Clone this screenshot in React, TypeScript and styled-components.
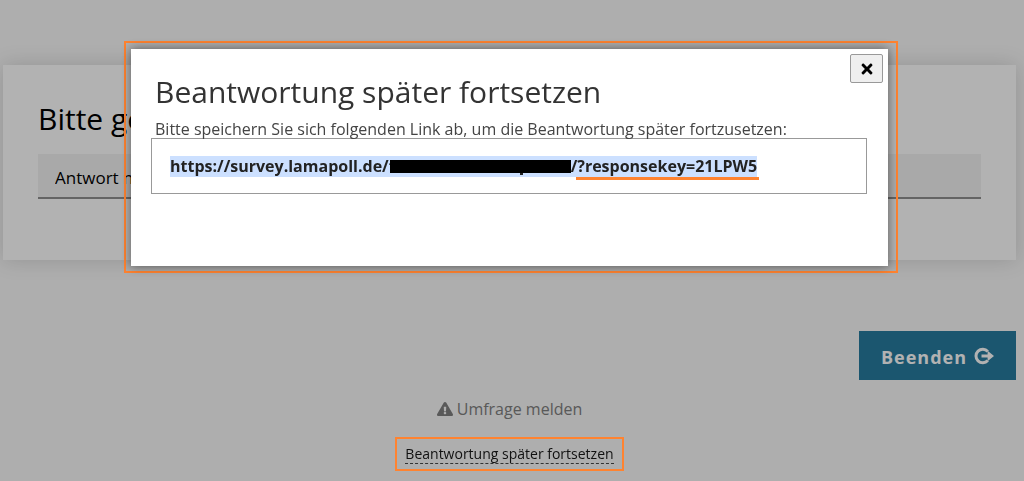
import React from "react";
import styled, { createGlobalStyle } from "styled-components";
import { FaExclamationTriangle, FaTimes } from "react-icons/fa";

const GlobalStyle = createGlobalStyle`
  * { box-sizing: border-box; }
  body {
    margin: 0;
    min-height: 100vh;
    background: #f9f9f9;
    color: #000;
    font-family: "Open Sans", "Noto Sans", sans-serif;
    font-size: 16px;
    line-height: 24px;
  }
`;

const Page = styled.div`
  display: flex;
  flex-direction: column;
  padding: 65px 8px 0 3px;
`;

const QuestionCard = styled.section`
  padding: 33px 35px 61px;
  background: #fff;
  box-shadow: 0 0 20px rgba(0, 0, 0, 0.15);
`;

const QuestionTitle = styled.h1`
  margin: 0 0 15px;
  font-size: 30px;
  line-height: 41px;
  font-weight: 400;
`;

const AnswerInput = styled.input`
  display: block;
  width: 100%;
  height: 45px;
  padding: 4px 17px 0;
  border: 0;
  border-bottom: 2px solid #909090;
  background: #f3f3f3;
  color: #000;
  font: inherit;
  font-size: 17px;
`;

const SubmitButton = styled.button`
  display: flex;
  align-items: center;
  align-self: flex-end;
  gap: 7px;
  margin-top: 71px;
  padding: 2px 22px 0;
  height: 49px;
  border: 0;
  background: #277b9f;
  color: #fff;
  font: inherit;
  font-size: 18px;
  font-weight: 700;
  letter-spacing: 1px;

  svg {
    margin-bottom: 2px;
  }
`;

const Footer = styled.footer`
  display: flex;
  flex-direction: column;
  align-items: center;
  gap: 16px;
  padding: 17px 0 11px;
`;

const ReportLink = styled.a`
  display: flex;
  align-items: center;
  gap: 4px;
  color: #808080;
  text-decoration: none;
`;

const Highlight = styled.div`
  padding: 6px 8px 5px;
  border: 2px solid #ff8330;
  position: relative;
  z-index: 2;
  line-height: 18px;
`;

const ResumeLink = styled.a`
  display: block;
  border-bottom: 1px dashed #333;
  color: #111;
  font-size: 14px;
  text-decoration: none;
`;

const Overlay = styled.div`
  position: fixed;
  inset: 0;
  z-index: 1;
  padding: 41px 126px 0 124px;
  background: rgba(0, 0, 0, 0.3);
`;

const DialogFrame = styled.div`
  padding: 6px 8px 5px 5px;
  border: 2px solid #ff8330;
`;

const Dialog = styled.div`
  position: relative;
  padding: 22px 21px 72px 20px;
  background: #fff;
  box-shadow: 0 0 10px rgba(0, 0, 0, 0.5);
`;

const CloseButton = styled.button`
  position: absolute;
  top: 5px;
  right: 5px;
  display: flex;
  align-items: center;
  justify-content: center;
  width: 33px;
  height: 29px;
  padding: 0;
  border: 1px solid #999;
  border-radius: 2px;
  background: #efefef;
  color: #000;
`;

const DialogTitle = styled.h2`
  margin: 0 0 8px;
  padding-left: 4px;
  color: #333;
  font-size: 30px;
  line-height: 41px;
  font-weight: 400;
`;

const DialogText = styled.p`
  margin: 0;
  padding-left: 4px;
  color: #444;
  line-height: 18px;
`;

const LinkBox = styled.div`
  padding: 17px 18px 16px;
  border: 1px solid #999;
  color: #222;
  font-weight: 700;
  line-height: 21px;
`;

const Selected = styled.span`
  display: inline-block;
  background: #cce0ff;
  white-space: nowrap;
`;

const Redaction = styled.span`
  position: relative;
  display: inline-block;
  width: 181px;
  height: 13px;
  margin-left: -6px;
  vertical-align: -1px;
  background: #000;

  &::after {
    content: "";
    position: absolute;
    top: 100%;
    right: 48px;
    width: 3px;
    height: 2px;
    background: #222;
  }
`;

const KeyPart = styled.span`
  position: relative;

  &::after {
    content: "";
    position: absolute;
    left: -1px;
    right: -2px;
    bottom: -3px;
    height: 3px;
    background: #ff8330;
  }
`;

const ExitIcon = () => (
  <svg width="20" height="18" viewBox="0 0 20 18" aria-hidden="true">
    <path
      d="M13.8 4.4A6.8 6.8 0 1 0 13.8 13.6"
      fill="none"
      stroke="currentColor"
      strokeWidth="3"
    />
    <path d="M7.5 7.4H13.6V3.8L20 9L13.6 14.2V10.6H7.5Z" fill="currentColor" />
  </svg>
);

export default function App() {
  return (
    <>
      <GlobalStyle />
      <Page>
        <QuestionCard>
          <QuestionTitle id="question">Bitte ge</QuestionTitle>
          <AnswerInput aria-labelledby="question" defaultValue="Antwort n" />
        </QuestionCard>
        <SubmitButton type="button">
          Beenden <ExitIcon />
        </SubmitButton>
        <Footer>
          <ReportLink href="#melden">
            <FaExclamationTriangle aria-hidden />
            Umfrage melden
          </ReportLink>
          <Highlight>
            <ResumeLink href="#fortsetzen">Beantwortung später fortsetzen</ResumeLink>
          </Highlight>
        </Footer>
      </Page>
      <Overlay>
        <DialogFrame>
          <Dialog role="dialog" aria-labelledby="dialog-title">
            <CloseButton type="button" aria-label="Schließen">
              <FaTimes size={16} />
            </CloseButton>
            <DialogTitle id="dialog-title">Beantwortung später fortsetzen</DialogTitle>
            <DialogText>
              Bitte speichern Sie sich folgenden Link ab, um die Beantwortung später fortzusetzen:
            </DialogText>
            <LinkBox>
              <Selected>
                https://survey.lamapoll.de/t
                <Redaction />/<KeyPart>?responsekey=21LPW5</KeyPart>
              </Selected>
            </LinkBox>
          </Dialog>
        </DialogFrame>
      </Overlay>
    </>
  );
}
